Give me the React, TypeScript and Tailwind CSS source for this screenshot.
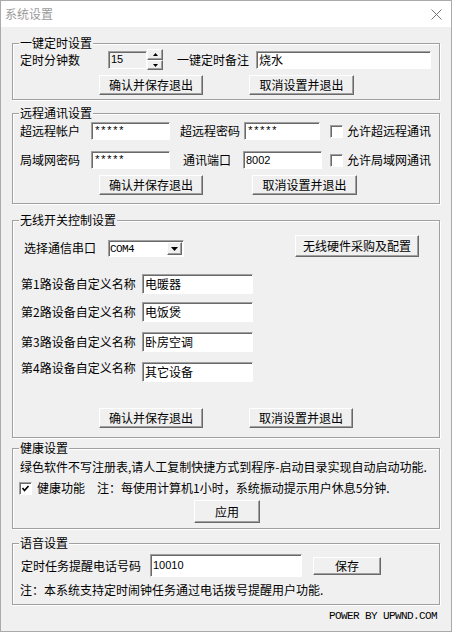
import React from "react";

const sunken =
  "border border-t-[#a0a0a0] border-l-[#a0a0a0] border-r-white border-b-white shadow-[inset_1px_1px_0_#696969]";
const raised =
  "border border-t-white border-l-white border-r-[#696969] border-b-[#696969] shadow-[inset_-1px_-1px_0_#a0a0a0] bg-[#f0f0f0]";

function Btn({ className, children }: { className: string; children: React.ReactNode }) {
  return (
    <div className={`flex items-center justify-center ${raised} ${className}`}>
      <span className="leading-[16px]">{children}</span>
    </div>
  );
}

function Group({
  title,
  className,
  children,
}: {
  title: string;
  className: string;
  children: React.ReactNode;
}) {
  return (
    <div
      className={`relative border border-[#a0a0a0] shadow-[inset_1px_1px_0_#fff,1px_1px_0_#fff] ${className}`}
    >
      <span className="absolute left-[6px] top-[-9px] bg-[#f0f0f0] px-[1px] leading-[16px]">
        {title}
      </span>
      {children}
    </div>
  );
}

function Check({ checked, className }: { checked?: boolean; className: string }) {
  return (
    <div
      className={`flex h-[13px] w-[13px] shrink-0 items-center justify-center bg-white ${sunken} ${className}`}
    >
      {checked && (
        <svg width="9" height="9" viewBox="0 0 9 9">
          <polyline points="1.5,4 3.5,6.5 7.5,2" fill="none" stroke="#000" strokeWidth="1.7" />
        </svg>
      )}
    </div>
  );
}

function Field({
  className,
  children,
}: {
  className: string;
  children?: React.ReactNode;
}) {
  return (
    <div className={`flex shrink-0 items-center overflow-hidden pl-[2px] ${sunken} ${className}`}>
      {children}
    </div>
  );
}

const ascii = "[font-family:'Liberation_Sans',Arial,sans-serif] text-[11px]";
const mono = "[font-family:'Liberation_Mono',monospace] text-[11px] tracking-[-0.6px]";

export default function App() {
  return (
    <div className="h-[632px] w-[452px] overflow-hidden border border-[#aaaaaa] bg-[#f0f0f0] text-[12px] text-black [font-family:'Noto_Sans_CJK_SC','Noto_Sans',sans-serif]">
      {/* title bar */}
      <div className="flex h-[26px] items-center justify-between bg-white pl-[4px] pr-[9px]">
        <span className="leading-[16px] text-[#9a9a9a]">系统设置</span>
        <svg width="11" height="11" viewBox="0 0 11 11">
          <path d="M0.5 0.5L10.5 10.5M10.5 0.5L0.5 10.5" stroke="#777" strokeWidth="1" />
        </svg>
      </div>

      <div className="px-[11px]">
        {/* one-key timer */}
        <Group title="一键定时设置" className="mt-[16px] h-[57px]">
          <div className="mt-[5px] flex h-[21px] items-center pl-[7px]">
            <span className="w-[88px] leading-[16px]">定时分钟数</span>
            <Field className={`h-[18px] w-[39px] bg-[#f0f0f0] ${ascii}`}>15</Field>
            <div className="flex h-[21px] w-[16px] flex-col">
              <div className={`flex h-[11px] items-center justify-center ${raised}`}>
                <svg width="5" height="3" viewBox="0 0 5 3">
                  <path d="M2.5 0L5 3H0Z" fill="#000" />
                </svg>
              </div>
              <div className={`flex h-[10px] items-center justify-center ${raised}`}>
                <svg width="5" height="3" viewBox="0 0 5 3">
                  <path d="M0 0H5L2.5 3Z" fill="#000" />
                </svg>
              </div>
            </div>
            <span className="ml-[14px] leading-[16px]">一键定时备注</span>
            <Field className="ml-[7px] h-[18px] w-[175px] bg-white">烧水</Field>
          </div>
          <div className="mt-[5px] flex pl-[86px]">
            <Btn className="h-[20px] w-[104px]">确认并保存退出</Btn>
            <Btn className="ml-[46px] h-[20px] w-[105px]">取消设置并退出</Btn>
          </div>
        </Group>

        {/* remote communication */}
        <Group title="远程通讯设置" className="mt-[13px] h-[91px]">
          <div className="mt-[8px] flex h-[18px] items-center pl-[7px]">
            <span className="w-[71px] leading-[16px]">超远程帐户</span>
            <Field className={`h-[18px] w-[79px] bg-white ${mono}`}>*****</Field>
            <span className="ml-[10px] w-[64px] leading-[16px]">超远程密码</span>
            <Field className={`h-[18px] w-[76px] bg-white ${mono}`}>*****</Field>
            <Check className="ml-[10px]" />
            <span className="ml-[4px] leading-[16px]">允许超远程通讯</span>
          </div>
          <div className="mt-[11px] flex h-[18px] items-center pl-[7px]">
            <span className="w-[71px] leading-[16px]">局域网密码</span>
            <Field className={`h-[18px] w-[79px] bg-white ${mono}`}>*****</Field>
            <span className="ml-[13px] w-[60px] leading-[16px]">通讯端口</span>
            <Field className={`h-[18px] w-[79px] bg-white ${ascii}`}>8002</Field>
            <Check className="ml-[8px]" />
            <span className="ml-[4px] leading-[16px]">允许局域网通讯</span>
          </div>
          <div className="mt-[6px] flex pl-[86px]">
            <Btn className="h-[20px] w-[104px]">确认并保存退出</Btn>
            <Btn className="ml-[49px] h-[20px] w-[105px]">取消设置并退出</Btn>
          </div>
        </Group>

        {/* wireless switch control */}
        <Group title="无线开关控制设置" className="mt-[16px] h-[218px]">
          <div className="mt-[14px] flex h-[22px] items-end pl-[11px]">
            <span className="mb-[1px] w-[84px] leading-[16px]">选择通信串口</span>
            <div
              className={`flex h-[17px] w-[76px] items-center justify-between bg-white pl-[1px] pr-[1px] ${sunken}`}
            >
              <span className={`${mono} leading-[12px]`}>COM4</span>
              <div className={`flex h-[13px] w-[15px] items-center justify-center ${raised}`}>
                <svg width="7" height="4" viewBox="0 0 7 4">
                  <path d="M0 0H7L3.5 4Z" fill="#000" />
                </svg>
              </div>
            </div>
            <Btn className="ml-[111px] h-[22px] w-[124px]">无线硬件采购及配置</Btn>
          </div>

          <div className="mt-[17px] flex h-[20px] items-center pl-[8px]">
            <span className="w-[121px] leading-[16px]">第1路设备自定义名称</span>
            <Field className="h-[20px] w-[111px] bg-white">电暖器</Field>
          </div>
          <div className="mt-[8px] flex h-[20px] items-center pl-[8px]">
            <span className="w-[121px] leading-[16px]">第2路设备自定义名称</span>
            <Field className="h-[20px] w-[111px] bg-white">电饭煲</Field>
          </div>
          <div className="mt-[10px] flex h-[20px] items-center pl-[8px]">
            <span className="w-[121px] leading-[16px]">第3路设备自定义名称</span>
            <Field className="h-[20px] w-[111px] bg-white">卧房空调</Field>
          </div>
          <div className="mt-[10px] flex h-[20px] items-start pl-[8px]">
            <span className="-mt-[2px] w-[121px] leading-[16px]">第4路设备自定义名称</span>
            <Field className="h-[20px] w-[111px] bg-white">其它设备</Field>
          </div>

          <div className="mt-[26px] flex pl-[86px]">
            <Btn className="h-[20px] w-[104px]">确认并保存退出</Btn>
            <Btn className="ml-[46px] h-[20px] w-[104px]">取消设置并退出</Btn>
          </div>
        </Group>

        {/* health */}
        <Group title="健康设置" className="mt-[10px] h-[81px]">
          <div className="mt-[10px] whitespace-nowrap pl-[7px] leading-[16px]">
            绿色软件不写注册表,请人工复制快捷方式到程序-启动目录实现自动启动功能.
          </div>
          <div className="mt-[5px] flex h-[16px] items-center whitespace-nowrap pl-[6px]">
            <Check checked className="" />
            <span className="ml-[5px] leading-[16px]">健康功能</span>
            <span className="ml-[12px] leading-[16px]">
              注：每使用计算机1小时，系统振动提示用户休息5分钟.
            </span>
          </div>
          <div className="mt-[4px] flex pl-[181px]">
            <Btn className="h-[23px] w-[66px]">应用</Btn>
          </div>
        </Group>

        {/* voice */}
        <Group title="语音设置" className="mt-[14px] h-[62px]">
          <div className="mt-[10px] flex h-[23px] items-center pl-[8px]">
            <span className="w-[129px] leading-[16px]">定时任务提醒电话号码</span>
            <div className={`h-[23px] w-[152px] shrink-0 bg-white pl-[2px] pt-[2px] ${sunken} ${ascii}`}>
              10010
            </div>
            <Btn className="ml-[11px] h-[18px] w-[68px]">保存</Btn>
          </div>
          <div className="mt-[5px] whitespace-nowrap pl-[7px] leading-[16px]">
            注：本系统支持定时闹钟任务通过电话拨号提醒用户功能.
          </div>
        </Group>

        <div className={`mt-[5px] pr-[3px] text-right leading-[12px] ${mono}`}>
          POWER BY UPWND.COM
        </div>
      </div>
    </div>
  );
}
